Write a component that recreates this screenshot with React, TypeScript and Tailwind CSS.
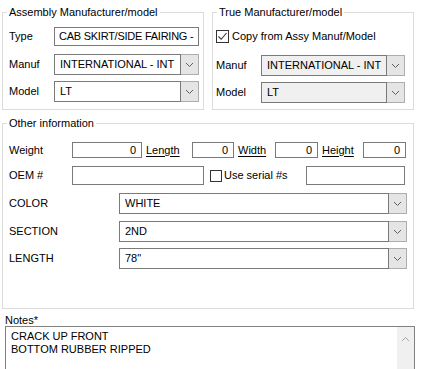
import type { ReactNode } from "react";

function Chevron({ up = false, color = "#606060" }: { up?: boolean; color?: string }) {
  return (
    <svg width="9" height="6" viewBox="0 0 9 6" className="block">
      <path
        d={up ? "M1 5 L4.5 1.5 L8 5" : "M1 1 L4.5 4.5 L8 1"}
        fill="none"
        stroke={color}
        strokeWidth="1"
      />
    </svg>
  );
}

function Combo({
  value,
  width,
  disabled = false,
}: {
  value: string;
  width: string;
  disabled?: boolean;
}) {
  return (
    <div className={`flex h-[21px] ${width}`}>
      <div
        className={`flex flex-1 items-center overflow-hidden whitespace-nowrap border border-[#7a7a7a] pl-[5px] ${
          disabled ? "bg-[#f0f0f0]" : "bg-white"
        }`}
      >
        {value}
      </div>
      <div className="flex w-[18px] items-center justify-center border border-l-0 border-[#adadad] bg-[#e5e5e5]">
        <Chevron />
      </div>
    </div>
  );
}

function TextBox({
  value = "",
  width,
  height = "h-[19px]",
  right = false,
  extra = "",
}: {
  value?: string;
  width: string;
  height?: string;
  right?: boolean;
  extra?: string;
}) {
  return (
    <div
      className={`flex items-center overflow-hidden whitespace-nowrap border border-[#7a7a7a] bg-white px-[5px] ${width} ${height} ${
        right ? "justify-end" : ""
      } ${extra}`}
    >
      {value}
    </div>
  );
}

function CheckBox({ checked = false, size = "w-[13px] h-[13px]" }: { checked?: boolean; size?: string }) {
  return (
    <div className={`flex shrink-0 items-center justify-center border border-[#333] bg-white ${size}`}>
      {checked && (
        <svg width="11" height="11" viewBox="0 0 11 11" className="block">
          <path d="M1.5 5.5 L4.2 8.3 L9.5 2" fill="none" stroke="#333" strokeWidth="1.1" />
        </svg>
      )}
    </div>
  );
}

function Group({
  title,
  className,
  children,
}: {
  title: string;
  className: string;
  children: ReactNode;
}) {
  return (
    <fieldset className={`border border-[#dcdcdc] ${className}`}>
      <legend className="ml-[4px] whitespace-nowrap px-[2px] leading-[14px]">{title}</legend>
      {children}
    </fieldset>
  );
}

function LinkLabel({ text, width }: { text: string; width: string }) {
  return (
    <div className={`whitespace-nowrap pl-[4px] ${width}`}>
      <span className="underline underline-offset-[2px]">{text}</span>
    </div>
  );
}

export default function App() {
  return (
    <div className="h-[369px] w-[423px] overflow-hidden whitespace-nowrap bg-white pl-[2px] text-[11px] leading-[13px] text-black [font-family:'Liberation_Sans',Arial,sans-serif]">
      <div className="flex gap-[8px]">
        <Group title="Assembly Manufacturer/model" className="mt-[5px] w-[202px]">
          <div className="flex flex-col pb-[7px] pl-[6px] pt-[8px]">
            <div className="flex items-center">
              <span className="w-[45px]">Type</span>
              <TextBox
                value="CAB SKIRT/SIDE FAIRING -"
                width="w-[145px]"
                extra="pl-[4px] pr-[1px] tracking-[-0.25px]"
              />
            </div>
            <div className="mt-[8px] flex items-center">
              <span className="w-[45px]">Manuf</span>
              <Combo value="INTERNATIONAL - INT" width="w-[145px]" />
            </div>
            <div className="mt-[6px] flex items-center">
              <span className="w-[45px]">Model</span>
              <Combo value="LT" width="w-[145px]" />
            </div>
          </div>
        </Group>
        <Group title="True Manufacturer/model" className="mt-[5px] w-[202px]">
          <div className="flex flex-col pb-[6px] pl-[3px] pt-[8px]">
            <div className="flex h-[19px] items-center">
              <CheckBox checked />
              <span className="ml-[3px]">Copy from Assy Manuf/Model</span>
            </div>
            <div className="mt-[9px] flex items-center">
              <span className="w-[45px]">Manuf</span>
              <Combo value="INTERNATIONAL - INT" width="w-[144px]" disabled />
            </div>
            <div className="mt-[6px] flex items-center">
              <span className="w-[45px]">Model</span>
              <Combo value="LT" width="w-[144px]" disabled />
            </div>
          </div>
        </Group>
      </div>

      <Group title="Other information" className="mt-[6px] w-[412px]">
        <div className="flex flex-col pb-[39px] pl-[6px] pt-[12px]">
          <div className="flex items-center">
            <span className="w-[63px]">Weight</span>
            <TextBox value="0" width="w-[70px]" height="h-[16px]" right />
            <LinkLabel text="Length" width="w-[50px]" />
            <TextBox value="0" width="w-[42px]" height="h-[16px]" right />
            <LinkLabel text="Width" width="w-[41px]" />
            <TextBox value="0" width="w-[43px]" height="h-[16px]" right />
            <LinkLabel text="Height" width="w-[45px]" />
            <TextBox value="0" width="w-[43px]" height="h-[16px]" right />
          </div>
          <div className="mt-[8px] flex items-center">
            <span className="w-[63px]">OEM #</span>
            <TextBox width="w-[132px]" />
            <div className="ml-[6px]">
              <CheckBox size="w-[12px] h-[12px]" />
            </div>
            <span className="w-[84px] pl-[2px]">Use serial #s</span>
            <TextBox width="w-[99px]" />
          </div>
          <div className="mt-[8px] flex items-center">
            <span className="w-[110px]">COLOR</span>
            <Combo value="WHITE" width="w-[288px]" />
          </div>
          <div className="mt-[7px] flex items-center">
            <span className="w-[110px]">SECTION</span>
            <Combo value="2ND" width="w-[288px]" />
          </div>
          <div className="mt-[6px] flex items-center">
            <span className="w-[110px]">LENGTH</span>
            <Combo value={'78"'} width="w-[288px]" />
          </div>
        </div>
      </Group>

      <div className="ml-[3px] mt-[5px] leading-[12px]">Notes*</div>
      <div className="ml-[3px] flex h-[70px] w-[410px] border border-[#828282] bg-white">
        <div className="flex-1 pl-[5px] pt-[3px]">
          <div>CRACK UP FRONT</div>
          <div>BOTTOM RUBBER RIPPED</div>
        </div>
        <div className="flex w-[17px] justify-center bg-[#f0f0f0] pt-[9px]">
          <Chevron up color="#a3a3a3" />
        </div>
      </div>
    </div>
  );
}
